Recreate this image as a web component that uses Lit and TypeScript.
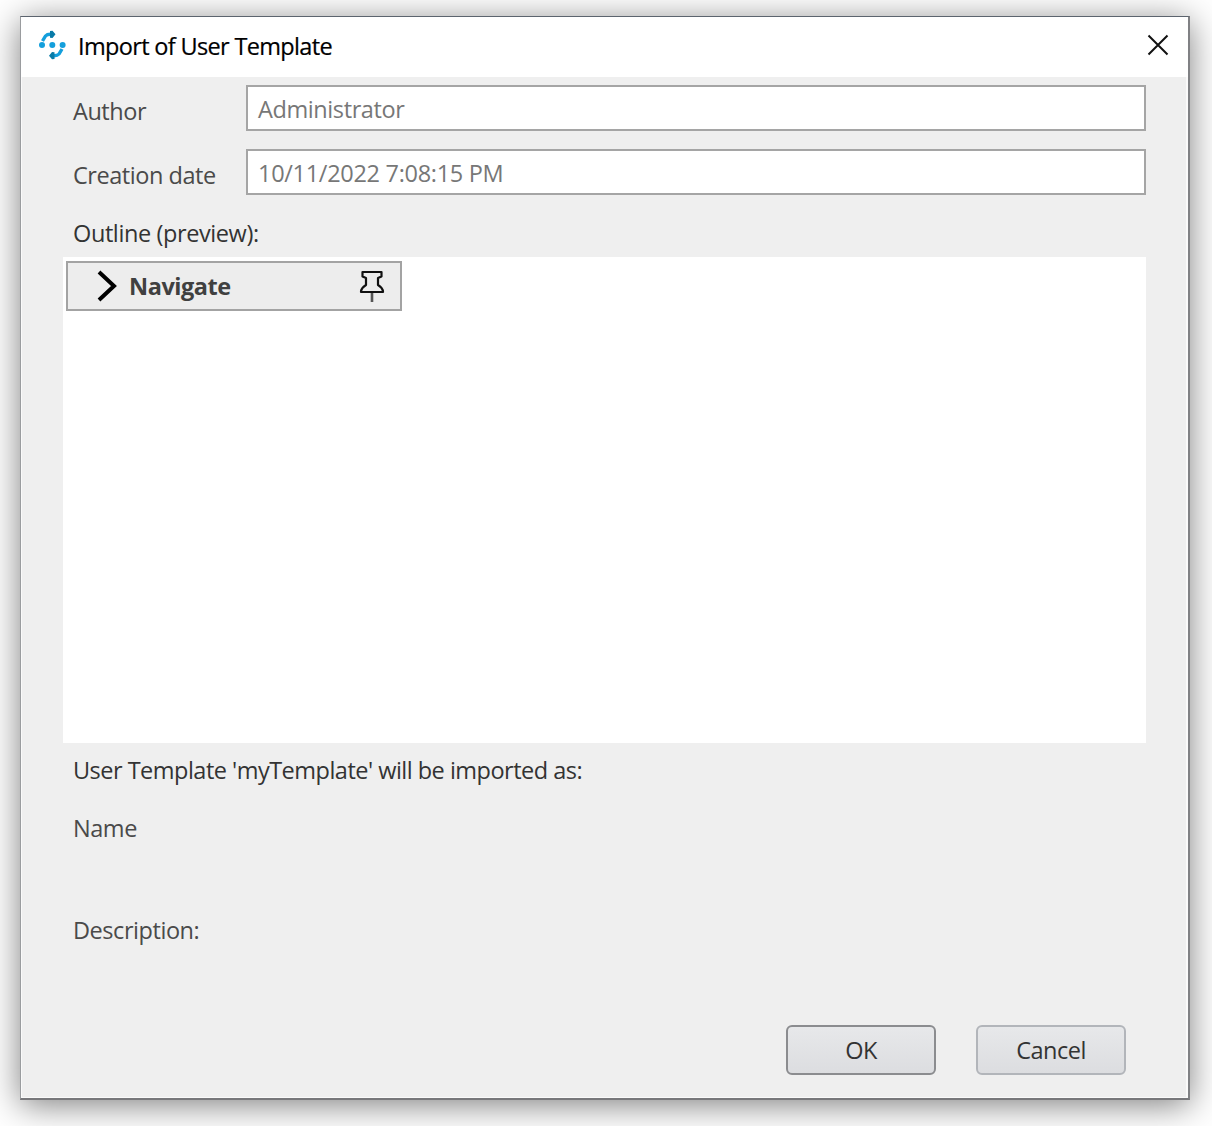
import { LitElement, html, css } from "lit";
import { customElement } from "lit/decorators.js";

@customElement("app-root")
export class AppRoot extends LitElement {
  static styles = css`
    :host {
      display: block;
      box-sizing: border-box;
      width: 1212px;
      height: 1126px;
      padding: 16px 22px 26px 20px;
      overflow: hidden;
      background: #fff;
      font-family: "Open Sans", "Noto Sans", sans-serif;
      font-size: 23.5px;
      line-height: 32px;
      color: #4a4a4a;
    }
    * { box-sizing: border-box; }
    .dialog {
      display: flex;
      flex-direction: column;
      width: 1170px;
      height: 1084px;
      border: 1px solid #9a9c9f;
      border-top-color: #5c646e;
      border-right: 2px solid #808184;
      border-bottom: 2px solid #77777a;
      background: #efefef;
      box-shadow: inset 1px 0 #fafafa, inset -2px -1px #fafafa, 0 5px 32px rgba(0, 0, 0, 0.5);
    }
    .titlebar {
      display: flex;
      align-items: center;
      height: 60px;
      flex: none;
      padding: 0 19px 4px 17px;
      background: #fff;
      color: #000;
    }
    .logo { width: 28px; height: 30px; margin-right: 12px; }
    .title { flex: 1; padding-top: 2px; letter-spacing: -0.66px; -webkit-text-stroke: 0.2px #000; }
    .close { width: 22px; height: 22px; }
    .body { display: flex; flex-direction: column; padding: 8px 42px 0; }
    .row { display: flex; height: 46px; margin-bottom: 18px; padding-left: 10px; }
    .label { width: 173px; padding-top: 10px; letter-spacing: -0.45px; }
    .field {
      flex: 1;
      border: 2px solid #a5a5a5;
      background: #fff;
      color: #777;
      padding: 6px 10px;
      letter-spacing: -0.4px;
    }
    .date { letter-spacing: -0.3px; }
    .dark { color: #333; }
    .line { padding-left: 10px; height: 32px; letter-spacing: -0.45px; white-space: nowrap; }
    .outline { margin-top: 4px; letter-spacing: -0.4px; }
    .preview { width: 1083px; height: 486px; margin-top: 8px; padding: 4px 3px; background: #fff; }
    .group {
      display: flex;
      align-items: center;
      width: 336px;
      height: 50px;
      border: 2px solid #a3a3a3;
      background: #ededed;
      padding: 0 15px 0 28px;
      font-weight: 700;
      color: #404040;
    }
    .chevron { width: 22px; height: 34px; margin-right: 11px; }
    .group-name { flex: 1; letter-spacing: -0.45px; }
    .pin { width: 26px; height: 34px; }
    .imported { margin-top: 11px; letter-spacing: -0.51px; }
    .name { margin-top: 26px; }
    .description { margin-top: 70px; }
    .actions { display: flex; justify-content: flex-end; gap: 40px; margin-top: 79px; padding-right: 20px; }
    .button {
      width: 150px;
      height: 50px;
      padding: 0;
      border: 2px solid #b2b5ba;
      border-radius: 6px;
      background: linear-gradient(#e7e8ea, #dcdde0);
      font: inherit;
      letter-spacing: -0.5px;
      color: #333;
    }
    .default { border-color: #8b8c8f; }
  `;

  render() {
    return html`
      <div class="dialog">
        <div class="titlebar">
          <svg class="logo" viewBox="0 0 28 30" fill="none">
            <path d="M4.500 11L7.500 6Q9 4.300 12.500 4.300M24 19L21 24Q19.500 25.700 16 25.700" stroke="#149fdc" stroke-width="3.400" />
            <circle cx="4" cy="15" r="3" fill="#149fdc" />
            <circle cx="14.300" cy="15" r="3" fill="#149fdc" />
            <circle cx="24.600" cy="15" r="3" fill="#149fdc" />
            <path d="M12 1L14.500.800L17.500 4.300L14.500 8L12 7.800ZM16.500 22.200L14 22L11 25.700L14 29.200L16.500 29Z" fill="#087ba8" />
          </svg>
          <span class="title">Import of User Template</span>
          <svg class="close" viewBox="0 0 22 22"><path d="M1.500 1.500L20.500 20.500M20.500 1.500L1.500 20.500" stroke="#111" stroke-width="2" /></svg>
        </div>
        <div class="body">
          <div class="row"><span class="label">Author</span><div class="field">Administrator</div></div>
          <div class="row"><span class="label">Creation date</span><div class="field date">10/11/2022 7:08:15 PM</div></div>
          <div class="line outline dark">Outline (preview):</div>
          <div class="preview">
            <div class="group">
              <svg class="chevron" viewBox="0 0 22 34" fill="none"><path d="M3 3L18 17L3 31" stroke="#000" stroke-width="4" /></svg>
              <span class="group-name">Navigate</span>
              <svg class="pin" viewBox="0 0 26 34" fill="none">
                <path d="M3.500 3H22.500V7.500L19 9V16Q24 19 24 23H2Q2 19 7 16V9L3.500 7.500Z" stroke="#111" stroke-width="2.200" stroke-linejoin="round" />
                <path d="M13 24V33" stroke="#555" stroke-width="2.600" />
              </svg>
            </div>
          </div>
          <div class="line imported dark">User Template 'myTemplate' will be imported as:</div>
          <div class="line name">Name</div>
          <div class="line description">Description:</div>
          <div class="actions">
            <button class="button default">OK</button>
            <button class="button">Cancel</button>
          </div>
        </div>
      </div>
    `;
  }
}
